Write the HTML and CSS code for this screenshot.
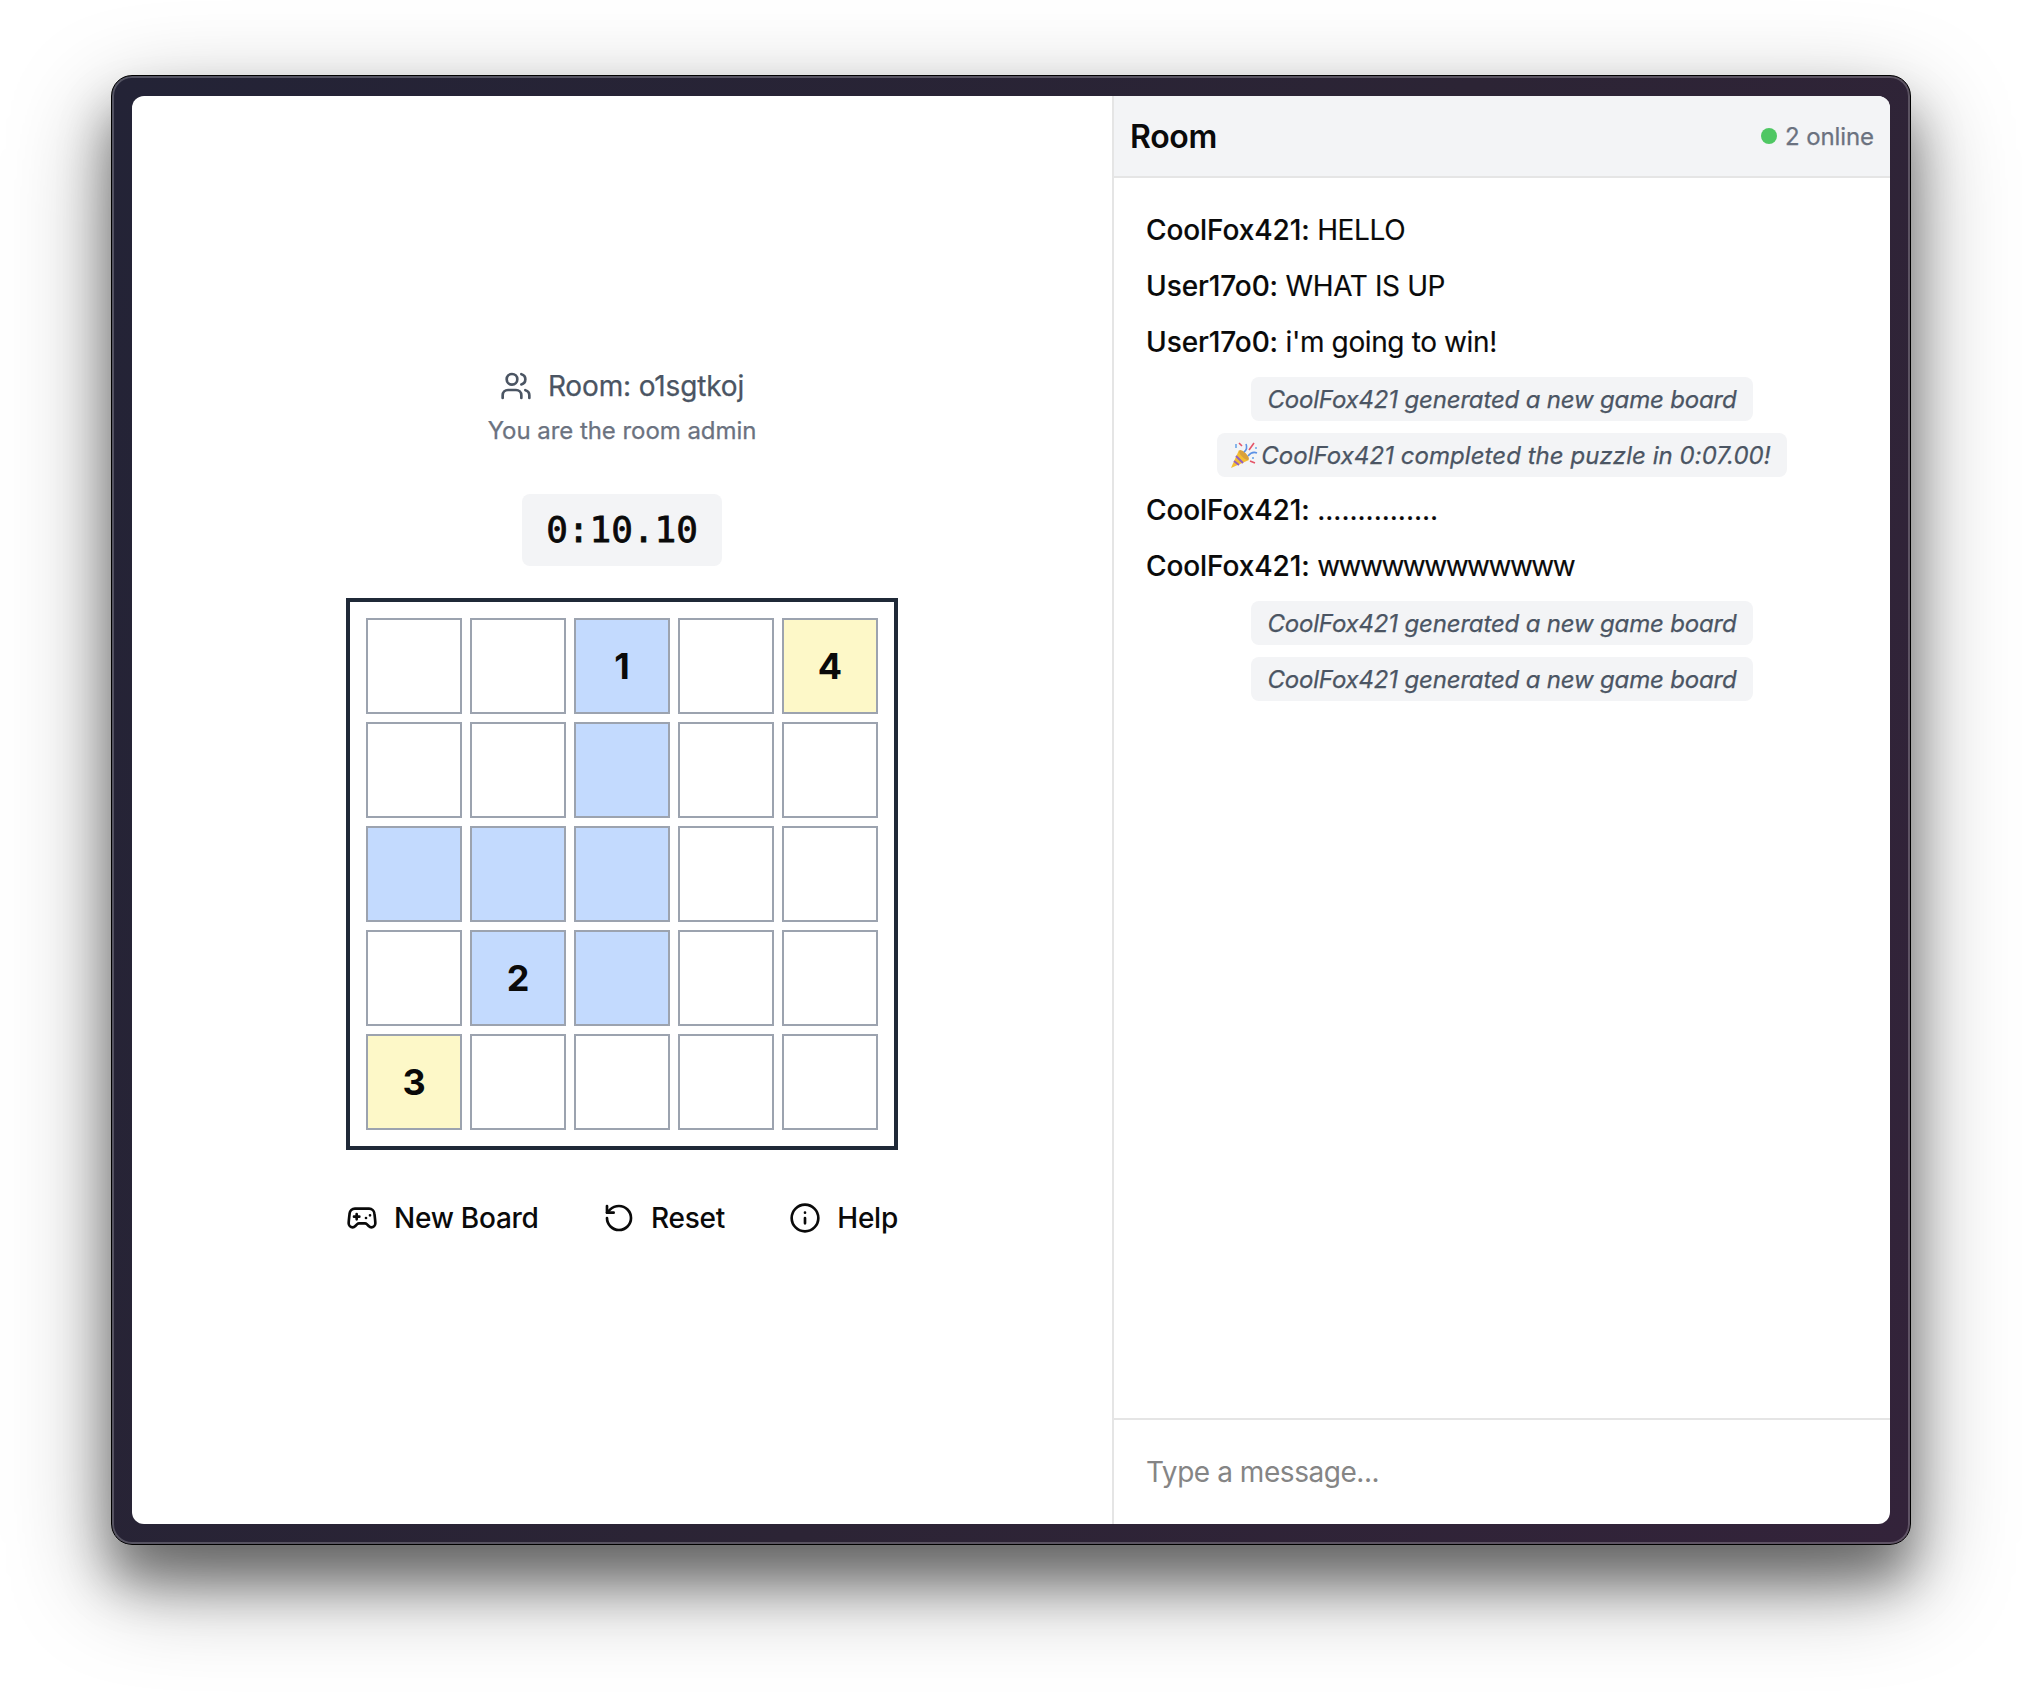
FILE: index.html
```html
<!DOCTYPE html>
<html lang="en">
<head>
<meta charset="utf-8">
<title>Room o1sgtkoj</title>
<link rel="stylesheet" href="styles.css">
</head>
<body>
<div class="window">
  <div class="app">
    <main class="game">
      <div class="room-name">
        <svg class="icon" viewBox="0 0 24 24"><path d="M16 21v-2a4 4 0 0 0-4-4H6a4 4 0 0 0-4 4v2"/><circle cx="9" cy="7" r="4"/><path d="M22 21v-2a4 4 0 0 0-3-3.87M16 3.13a4 4 0 0 1 0 7.75"/></svg>
        <span>Room: o1sgtkoj</span>
      </div>
      <div class="role">You are the room admin</div>
      <div class="timer">0:10.10</div>
      <div class="board">
        <div class="cell"></div><div class="cell"></div><div class="cell path">1</div><div class="cell"></div><div class="cell target">4</div>
        <div class="cell"></div><div class="cell"></div><div class="cell path"></div><div class="cell"></div><div class="cell"></div>
        <div class="cell path"></div><div class="cell path"></div><div class="cell path"></div><div class="cell"></div><div class="cell"></div>
        <div class="cell"></div><div class="cell path">2</div><div class="cell path"></div><div class="cell"></div><div class="cell"></div>
        <div class="cell target">3</div><div class="cell"></div><div class="cell"></div><div class="cell"></div><div class="cell"></div>
      </div>
      <div class="actions">
        <button class="action"><svg class="icon" viewBox="0 0 24 24"><path d="M6 11h4M8 9v4M15 12h.01M18 10h.01M17.32 5H6.68a4 4 0 0 0-3.978 3.59C2.604 9.416 2 14.456 2 16a3 3 0 0 0 3 3c1 0 1.5-.5 2-1l1.414-1.414A2 2 0 0 1 9.828 16h4.344a2 2 0 0 1 1.414.586L17 18c.5.5 1 1 2 1a3 3 0 0 0 3-3c0-1.545-.604-6.584-.685-7.258A4 4 0 0 0 17.32 5z"/></svg><span>New Board</span></button>
        <button class="action"><svg class="icon" viewBox="0 0 24 24"><path d="M3 12a9 9 0 1 0 9-9 9.75 9.75 0 0 0-6.74 2.74L3 8"/><path d="M3 3v5h5"/></svg><span>Reset</span></button>
        <button class="action"><svg class="icon" viewBox="0 0 24 24"><circle cx="12" cy="12" r="10"/><path d="M12 16v-4M12 8h.01"/></svg><span>Help</span></button>
      </div>
    </main>
    <aside class="chat">
      <header class="chat-header">
        <h2 class="chat-title">Room</h2>
        <div class="online"><span class="dot"></span><span>2 online</span></div>
      </header>
      <div class="messages">
        <div class="message"><b>CoolFox421:</b> HELLO</div>
        <div class="message"><b>User17o0:</b> WHAT IS UP</div>
        <div class="message"><b>User17o0:</b> i'm going to win!</div>
        <div class="notice"><span class="pill">CoolFox421 generated a new game board</span></div>
        <div class="notice"><span class="pill pill-win"><svg class="party" viewBox="0 0 28 28"><path d="M9 9 1 27l18-8z" fill="#f4bd32"/><path d="m6 15 7 7M4 20l5 4" stroke="#9260bd" stroke-width="2"/><ellipse cx="14" cy="14" rx="2.5" ry="6.5" transform="rotate(-45 14 14)" fill="#d9a03a"/><path d="M14 11q4-3 2-8M18 15q4-5 9-3" fill="none" stroke="#5b91e5" stroke-width="1.6"/><path d="m19 9 5-7M9 2l3 3M20 20l5 2" stroke="#e45468" stroke-width="1.6"/><path d="M6 3v4M25 7h2M23 16v2" stroke="#6da6e8" stroke-width="1.6"/></svg>CoolFox421 completed the puzzle in 0:07.00!</span></div>
        <div class="message"><b>CoolFox421:</b> <span class="dots">...............</span></div>
        <div class="message"><b>CoolFox421:</b> <span class="tight">wwwwwwwwwwww</span></div>
        <div class="notice"><span class="pill">CoolFox421 generated a new game board</span></div>
        <div class="notice"><span class="pill">CoolFox421 generated a new game board</span></div>
      </div>
      <div class="composer"><input class="field" type="text" placeholder="Type a message..."></div>
    </aside>
  </div>
</div>
</body>
</html>
```
FILE: styles.css
```css
* { box-sizing: border-box; }
body {
  margin: 0;
  width: 2022px;
  height: 1692px;
  padding: 75px 111px 147px;
  overflow: hidden;
  background: #fff;
  color: #0a0a0a;
  font: 28px/40px Inter, "Liberation Sans", sans-serif;
}
.window {
  width: 1800px;
  height: 1470px;
  padding: 20px;
  border: 1px solid #000;
  border-radius: 21px;
  background: linear-gradient(115deg, #232336, #2c2435 55%, #33233a);
  box-shadow: inset 0 0 0 2px rgba(255, 255, 255, .22), 0 36px 50px rgba(0, 0, 0, .4), 0 36px 100px rgba(0, 0, 0, .4);
}
.app {
  display: flex;
  width: 1758px;
  height: 1428px;
  overflow: hidden;
  border-radius: 12px;
  background: #fff;
}
.game {
  display: flex;
  flex: 1;
  flex-direction: column;
  align-items: center;
  justify-content: center;
}
.icon {
  width: 32px;
  height: 32px;
  fill: none;
  stroke: currentColor;
  stroke-width: 2;
  stroke-linecap: round;
  stroke-linejoin: round;
}
.room-name { display: flex; align-items: center; gap: 16px; color: #4b5563; letter-spacing: -.15px; -webkit-text-stroke: .25px; }
.role { height: 32px; margin-top: 8px; color: #6b7280; font-size: 24px; line-height: 34px; letter-spacing: -.05px; -webkit-text-stroke: .25px; }
.timer {
  width: 200px;
  margin-top: 48px;
  border-radius: 8px;
  background: #f3f4f6;
  font: 36px/72px "DejaVu Sans Mono", monospace;
  text-align: center;
  -webkit-text-stroke: .8px;
}
.board {
  display: grid;
  grid-template-columns: repeat(5, 96px);
  grid-auto-rows: 96px;
  gap: 8px;
  margin-top: 32px;
  padding: 16px;
  border: 4px solid #1f2937;
}
.cell {
  display: flex;
  align-items: center;
  justify-content: center;
  border: 2px solid #9ca3af;
  font-size: 36px;
  font-weight: 700;
}
.path { background: #c3dafe; }
.target { background: #fdf8c8; }
.actions { display: flex; width: 552px; height: 72px; margin-top: 32px; justify-content: space-between; }
.action {
  display: flex;
  align-items: center;
  gap: 16px;
  padding: 0;
  border: 0;
  background: none;
  color: inherit;
  font: 500 28px/40px Inter, "Liberation Sans", sans-serif;
  letter-spacing: -.25px;
}
.chat { display: flex; flex-direction: column; width: 778px; border-left: 2px solid #e5e5e5; }
.chat-header {
  display: flex;
  align-items: center;
  justify-content: space-between;
  height: 82px;
  padding: 2px 16px 0;
  border-bottom: 2px solid #e5e5e5;
  background: #f3f4f6;
}
.chat-title { margin: 0; font-size: 32px; font-weight: 600; letter-spacing: -.3px; }
.online { display: flex; align-items: center; gap: 8px; color: #6b7280; font-size: 24px; letter-spacing: -.1px; -webkit-text-stroke: .25px; }
.dot { width: 16px; height: 16px; margin-top: -2px; border-radius: 50%; background: #4fc763; }
.messages { display: flex; flex: 1; flex-direction: column; gap: 16px; padding: 32px; }
.message { height: 40px; letter-spacing: -.38px; white-space: nowrap; -webkit-text-stroke: .15px; }
.message b { font-weight: 500; letter-spacing: -.08px; }
.tight { letter-spacing: -1.5px; }
.dots { letter-spacing: 0; }
.notice { display: flex; height: 40px; justify-content: center; }
.pill {
  display: flex;
  align-items: center;
  height: 44px;
  margin-top: -1px;
  padding: 2px 16px 0;
  border-radius: 8px;
  background: #f3f4f6;
  color: #4b5563;
  font-size: 24px;
  font-style: italic;
  letter-spacing: -.17px;
  white-space: nowrap;
  -webkit-text-stroke: .25px;
}
.pill-win { letter-spacing: .05px; }
.party { width: 28px; height: 28px; margin: -2px 3px 0 -3px; }
.composer { display: flex; height: 106px; padding: 0 32px; border-top: 2px solid #e5e5e5; }
.field { flex: 1; padding: 0; border: 0; outline: 0; background: none; font: inherit; letter-spacing: -.45px; }
.field::placeholder { color: #858585; opacity: 1; }
```
